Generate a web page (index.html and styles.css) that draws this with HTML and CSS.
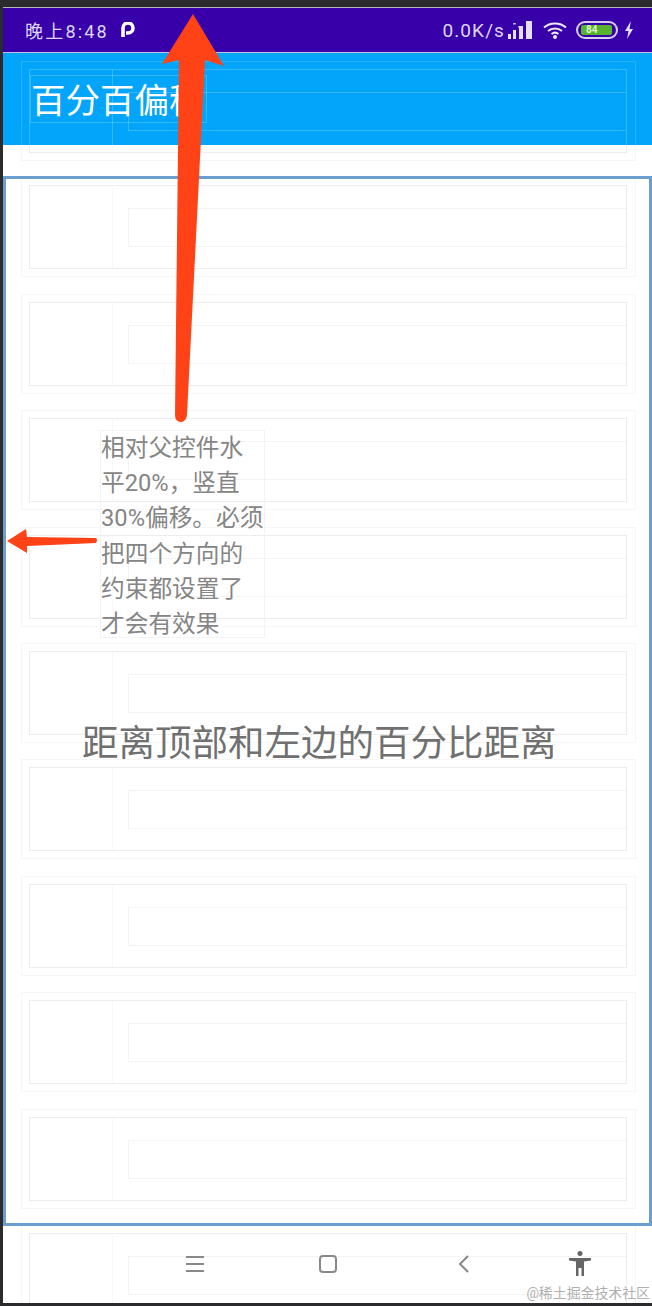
FILE: index.html
```html
<!DOCTYPE html>
<html lang="zh-CN">
<head>
  <meta charset="UTF-8">
  <meta name="viewport" content="width=device-width, initial-scale=1.0">
  <title>百分百偏移</title>
  <link rel="stylesheet" href="styles.css">
</head>
<body>

<div class="screen">
  <!-- Barre d'état -->
  <div class="status-bar">
    <span class="status-time">晚上8:48</span>
    <svg class="icon-p" width="14" height="16" viewBox="0 0 14 16">
      <path d="M2 15V6a5 5 0 1 1 5 5H5" fill="none" stroke="#fff" stroke-width="3.6"/>
    </svg>
    <span class="status-speed">0.0K/s</span>
    <svg class="icon-signal" width="25" height="20" viewBox="0 0 25 20">
      <rect x="0" y="14" width="3" height="5" fill="#e6def5"/>
      <rect x="5" y="10" width="3" height="9" fill="#e6def5"/>
      <rect x="10" y="6" width="1.5" height="1.5" fill="#b9a8e6"/>
      <rect x="5" y="3" width="3" height="1.5" fill="#b9a8e6"/>
      <rect x="11" y="6" width="4" height="13" fill="#e6def5"/>
      <rect x="18" y="1" width="6" height="18" fill="#e6def5"/>
    </svg>
    <svg class="icon-wifi" width="24" height="18" viewBox="0 0 24 18">
      <path d="M1 6.5C7 1 17 1 23 6.5M5 10c4-3.5 10-3.5 14 0M8.5 13c2-1.600 5-1.600 7 0" fill="none" stroke="#eee8fa" stroke-width="2"/>
      <circle cx="12" cy="16" r="2" fill="#eee8fa"/>
    </svg>
    <div class="battery"><span class="battery-level">84</span></div>
    <svg class="icon-bolt" width="10" height="18" viewBox="0 0 10 18">
      <path d="M7 0L1 10h3.500L3 18l6-10H5.500z" fill="#e6def5"/>
    </svg>
  </div>

  <!-- Barre d'application -->
  <div class="app-bar">
    <div class="row row-bar">
      <div class="row-inner">
        <div class="row-thumb"></div>
        <div class="row-text"></div>
      </div>
    </div>
    <div class="app-title">百分百偏移</div>
  </div>

  <!-- Liste : contours des vues -->
  <div class="list">
    <div class="row"><div class="row-inner"><div class="row-thumb"></div><div class="row-text"></div></div></div>
    <div class="row"><div class="row-inner"><div class="row-thumb"></div><div class="row-text"></div></div></div>
    <div class="row"><div class="row-inner"><div class="row-thumb"></div><div class="row-text"></div></div></div>
    <div class="row"><div class="row-inner"><div class="row-thumb"></div><div class="row-text"></div></div></div>
    <div class="row"><div class="row-inner"><div class="row-thumb"></div><div class="row-text"></div></div></div>
    <div class="row"><div class="row-inner"><div class="row-thumb"></div><div class="row-text"></div></div></div>
    <div class="row"><div class="row-inner"><div class="row-thumb"></div><div class="row-text"></div></div></div>
    <div class="row"><div class="row-inner"><div class="row-thumb"></div><div class="row-text"></div></div></div>
    <div class="row"><div class="row-inner"><div class="row-thumb"></div><div class="row-text"></div></div></div>
    <div class="row"><div class="row-inner"><div class="row-thumb"></div><div class="row-text"></div></div></div>
    <div class="row"><div class="row-inner"><div class="row-thumb"></div><div class="row-text"></div></div></div>
  </div>

  <!-- Vues placées en pourcentage -->
  <div class="selection"></div>
  <div class="note">相对父控件水平20%，竖直30%偏移。必须把四个方向的约束都设置了才会有效果</div>
  <div class="big-label">距离顶部和左边的百分比距离</div>

  <!-- Barre de navigation -->
  <div class="nav-bar">
    <svg class="nav-menu" width="18" height="18" viewBox="0 0 18 18">
      <path d="M0 2h18M0 9h18M0 16h18" stroke="#888" stroke-width="2"/>
    </svg>
    <svg class="nav-home" width="18" height="18" viewBox="0 0 18 18">
      <rect x="1" y="1" width="16" height="16" rx="3" fill="none" stroke="#888" stroke-width="2"/>
    </svg>
    <svg class="nav-back" width="12" height="18" viewBox="0 0 12 18">
      <path d="M10 1L2 9l8 8" fill="none" stroke="#888" stroke-width="2"/>
    </svg>
    <svg class="nav-access" width="22" height="25" viewBox="0 0 22 25">
      <circle cx="11" cy="2.500" r="2.500" fill="#666"/>
      <path d="M0 7h22v2.500l-7 1V25h-2.500v-8h-3v8H7V10.500l-7-1z" fill="#666"/>
    </svg>
  </div>
</div>

<!-- Flèches d'annotation -->
<svg class="arrows" width="652" height="1306" viewBox="0 0 652 1306">
  <path d="M193 14L224 66L205 60L187 415Q186 422 181 422Q175 422 175 415L179 60L162 64Z" fill="#ff4316"/>
  <path d="M7 541L26 529L27 537L96 538Q98 540 96 543L27 546L27 553Z" fill="#ff4316"/>
</svg>

<div class="watermark">@稀土掘金技术社区</div>

</body>
</html>
```

FILE: styles.css
```css
html, body {
  margin: 0;
  height: 1306px;
  overflow: hidden;
  background-color: #2b2b2d;
  font-family: Roboto, "Noto Sans CJK SC", sans-serif;
}

/* Écran du téléphone */
.screen {
  position: relative;
  margin: 8px 0 0 3px;
  height: 1295px;
  overflow: hidden;
  background-color: #fff;
  box-shadow: 0 -1px 0 #b9b4bd;
}

.status-bar {
  display: flex;
  align-items: center;
  height: 44px;
  padding: 0 18px 0 22px;
  background-color: #3700a8;
  border-bottom: 1px solid #c5bce6;
  color: #ddd5f3;
  font-size: 19px;
}

.status-time {
  font-size: 18px;
  letter-spacing: 2.2px;
}

.icon-p {
  margin-left: 12px;
}

.status-speed {
  margin-left: auto;
  letter-spacing: 1.1px;
}

.icon-signal {
  margin-left: 3px;
}

.icon-wifi {
  margin-left: 10px;
}

.battery {
  display: flex;
  align-items: center;
  box-sizing: border-box;
  width: 42px;
  height: 18px;
  margin-left: 9px;
  padding: 2px 3px;
  border: 2px solid #d8cff0;
  border-radius: 9px;
}

.battery-level {
  width: 26px;
  height: 10px;
  padding-left: 5px;
  background-color: #58b32e;
  border-radius: 2px;
  color: #dff3c8;
  font-size: 10px;
  line-height: 10px;
  font-weight: bold;
}

.icon-bolt {
  margin-left: 6px;
}

.app-bar {
  position: relative;
  z-index: 1;
  height: 92px;
  overflow: hidden;
  background-color: #03a5fb;
}

.app-title {
  position: absolute;
  left: 27px;
  top: 22px;
  box-sizing: border-box;
  width: 177px;
  height: 48px;
  border: 1px solid rgba(255, 255, 255, 0.2);
  color: #fff;
  font-size: 34.5px;
  line-height: 50px;
  white-space: nowrap;
  overflow: hidden;
}

/* Contours des lignes de la liste */
.list {
  position: absolute;
  left: 18px;
  top: 53px;
  display: flex;
  flex-direction: column;
  gap: 16.4px;
  width: 615px;
}

.row {
  flex: none;
  box-sizing: border-box;
  height: 100px;
  padding: 7px 8px 7px 7px;
  border: 1px solid #f6f6f6;
}

.row-inner {
  display: flex;
  box-sizing: border-box;
  height: 84px;
  border: 1px solid #ededed;
}

.row-thumb {
  flex: none;
  width: 82px;
  border-right: 1px solid #f8f8f8;
}

.row-text {
  flex: 1;
  height: 37px;
  margin: 22px 0 0 15px;
  border: 1px solid #f3f3f3;
  border-right: none;
}

/* Même contour, vu à travers la barre bleue */
.row-bar {
  position: absolute;
  left: 18px;
  top: 8px;
  width: 615px;
  border-color: rgba(255, 255, 255, 0.15);
}

.row-bar .row-inner,
.row-bar .row-thumb,
.row-bar .row-text {
  border-color: rgba(255, 255, 255, 0.2);
}

.selection {
  position: absolute;
  left: 0;
  top: 168px;
  box-sizing: border-box;
  width: 649px;
  height: 1050px;
  border: 3px solid #6b9fcf;
}

.note {
  position: absolute;
  left: 97px;
  top: 422px;
  box-sizing: border-box;
  width: 165px;
  height: 208px;
  border: 1px solid #f3f3f3;
  color: #858585;
  font-size: 23.7px;
  line-height: 35.2px;
}

.big-label {
  position: absolute;
  left: 79px;
  top: 712px;
  color: #707070;
  font-size: 36.5px;
  line-height: 48px;
  white-space: nowrap;
}

.nav-bar {
  position: absolute;
  left: 183px;
  top: 1243px;
  display: flex;
  align-items: center;
}

.nav-home {
  margin-left: 115px;
}

.nav-back {
  margin-left: 121px;
}

.nav-access {
  margin-left: 99px;
}

.arrows {
  position: absolute;
  z-index: 2;
  left: 0;
  top: 0;
}

.watermark {
  position: absolute;
  z-index: 2;
  right: 2px;
  top: 1284px;
  color: #b0b0b0;
  font-size: 13.9px;
  line-height: 18px;
  white-space: nowrap;
}
```
